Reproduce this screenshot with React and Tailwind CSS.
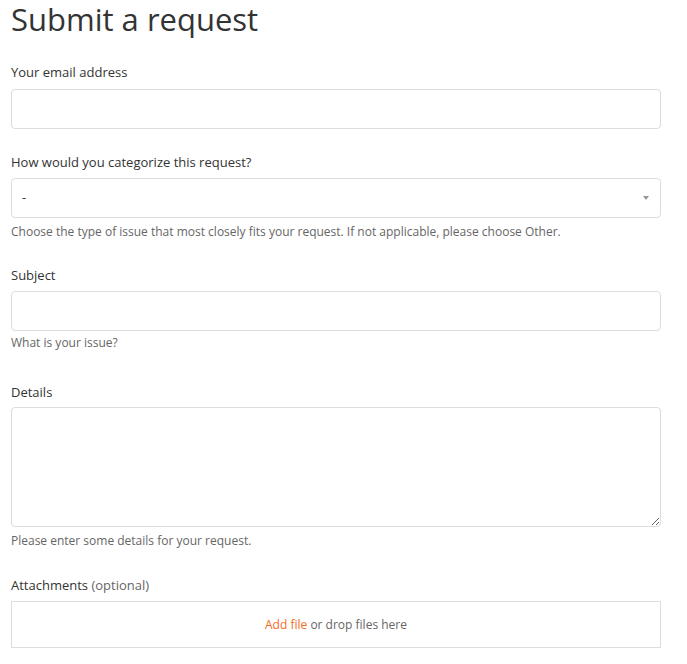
export default function App() {
  const font = { fontFamily: '"Open Sans", "Noto Sans", sans-serif' };
  return (
    <div className="bg-white min-h-screen" style={font}>
      <div className="pl-[11px] w-[661px]">
        <h1 className="text-[31px] leading-[38px] text-[#333] font-normal m-0">Submit a request</h1>

        <div className="mt-[24px]">
          <label className="block text-[13px] leading-[20px] text-[#333] mb-[7px]">Your email address</label>
          <input type="email" className="block w-full h-10 border border-[#ddd] rounded-[4px] outline-none px-[10px]" />
        </div>

        <div className="mt-[23px]">
          <label className="block text-[13px] leading-[20px] text-[#333] mb-[6px]">How would you categorize this request?</label>
          <div className="relative h-10 border border-[#ddd] rounded-[4px] flex items-center px-[10px]">
            <span className="text-[13px] text-[#333]">-</span>
            <svg className="absolute right-[11px] top-[17px]" width="6" height="4" viewBox="0 0 6 4">
              <path d="M0 0 L6 0 L3 4 Z" fill="#999" />
            </svg>
          </div>
          <p className="text-[12px] leading-[18px] text-[#666] mt-[5px]">Choose the type of issue that most closely fits your request. If not applicable, please choose Other.</p>
        </div>

        <div className="mt-[24px]">
          <label className="block text-[13px] leading-[20px] text-[#333] mb-[6px]">Subject</label>
          <input type="text" className="block w-full h-10 border border-[#ddd] rounded-[4px] outline-none px-[10px]" />
          <p className="text-[12px] leading-[18px] text-[#666] mt-[3px]">What is your issue?</p>
        </div>

        <div className="mt-[30px]">
          <label className="block text-[13px] leading-[20px] text-[#333] mb-[5px]">Details</label>
          <textarea className="block w-full h-[120px] border border-[#ddd] rounded-[4px] outline-none px-[10px] resize-y" />
          <p className="text-[12px] leading-[18px] text-[#666] mt-[5px]">Please enter some details for your request.</p>
        </div>

        <div className="mt-[25px]">
          <label className="block text-[13px] leading-[20px] text-[#333] mb-[6px]">
            Attachments <span className="text-[#666]">(optional)</span>
          </label>
          <div className="h-[47px] border border-[#ddd] flex items-center justify-center text-[12px] text-[#666]">
            <span><span className="text-[#f26b1d]">Add file</span> or drop files here</span>
          </div>
        </div>
      </div>
    </div>
  );
}
